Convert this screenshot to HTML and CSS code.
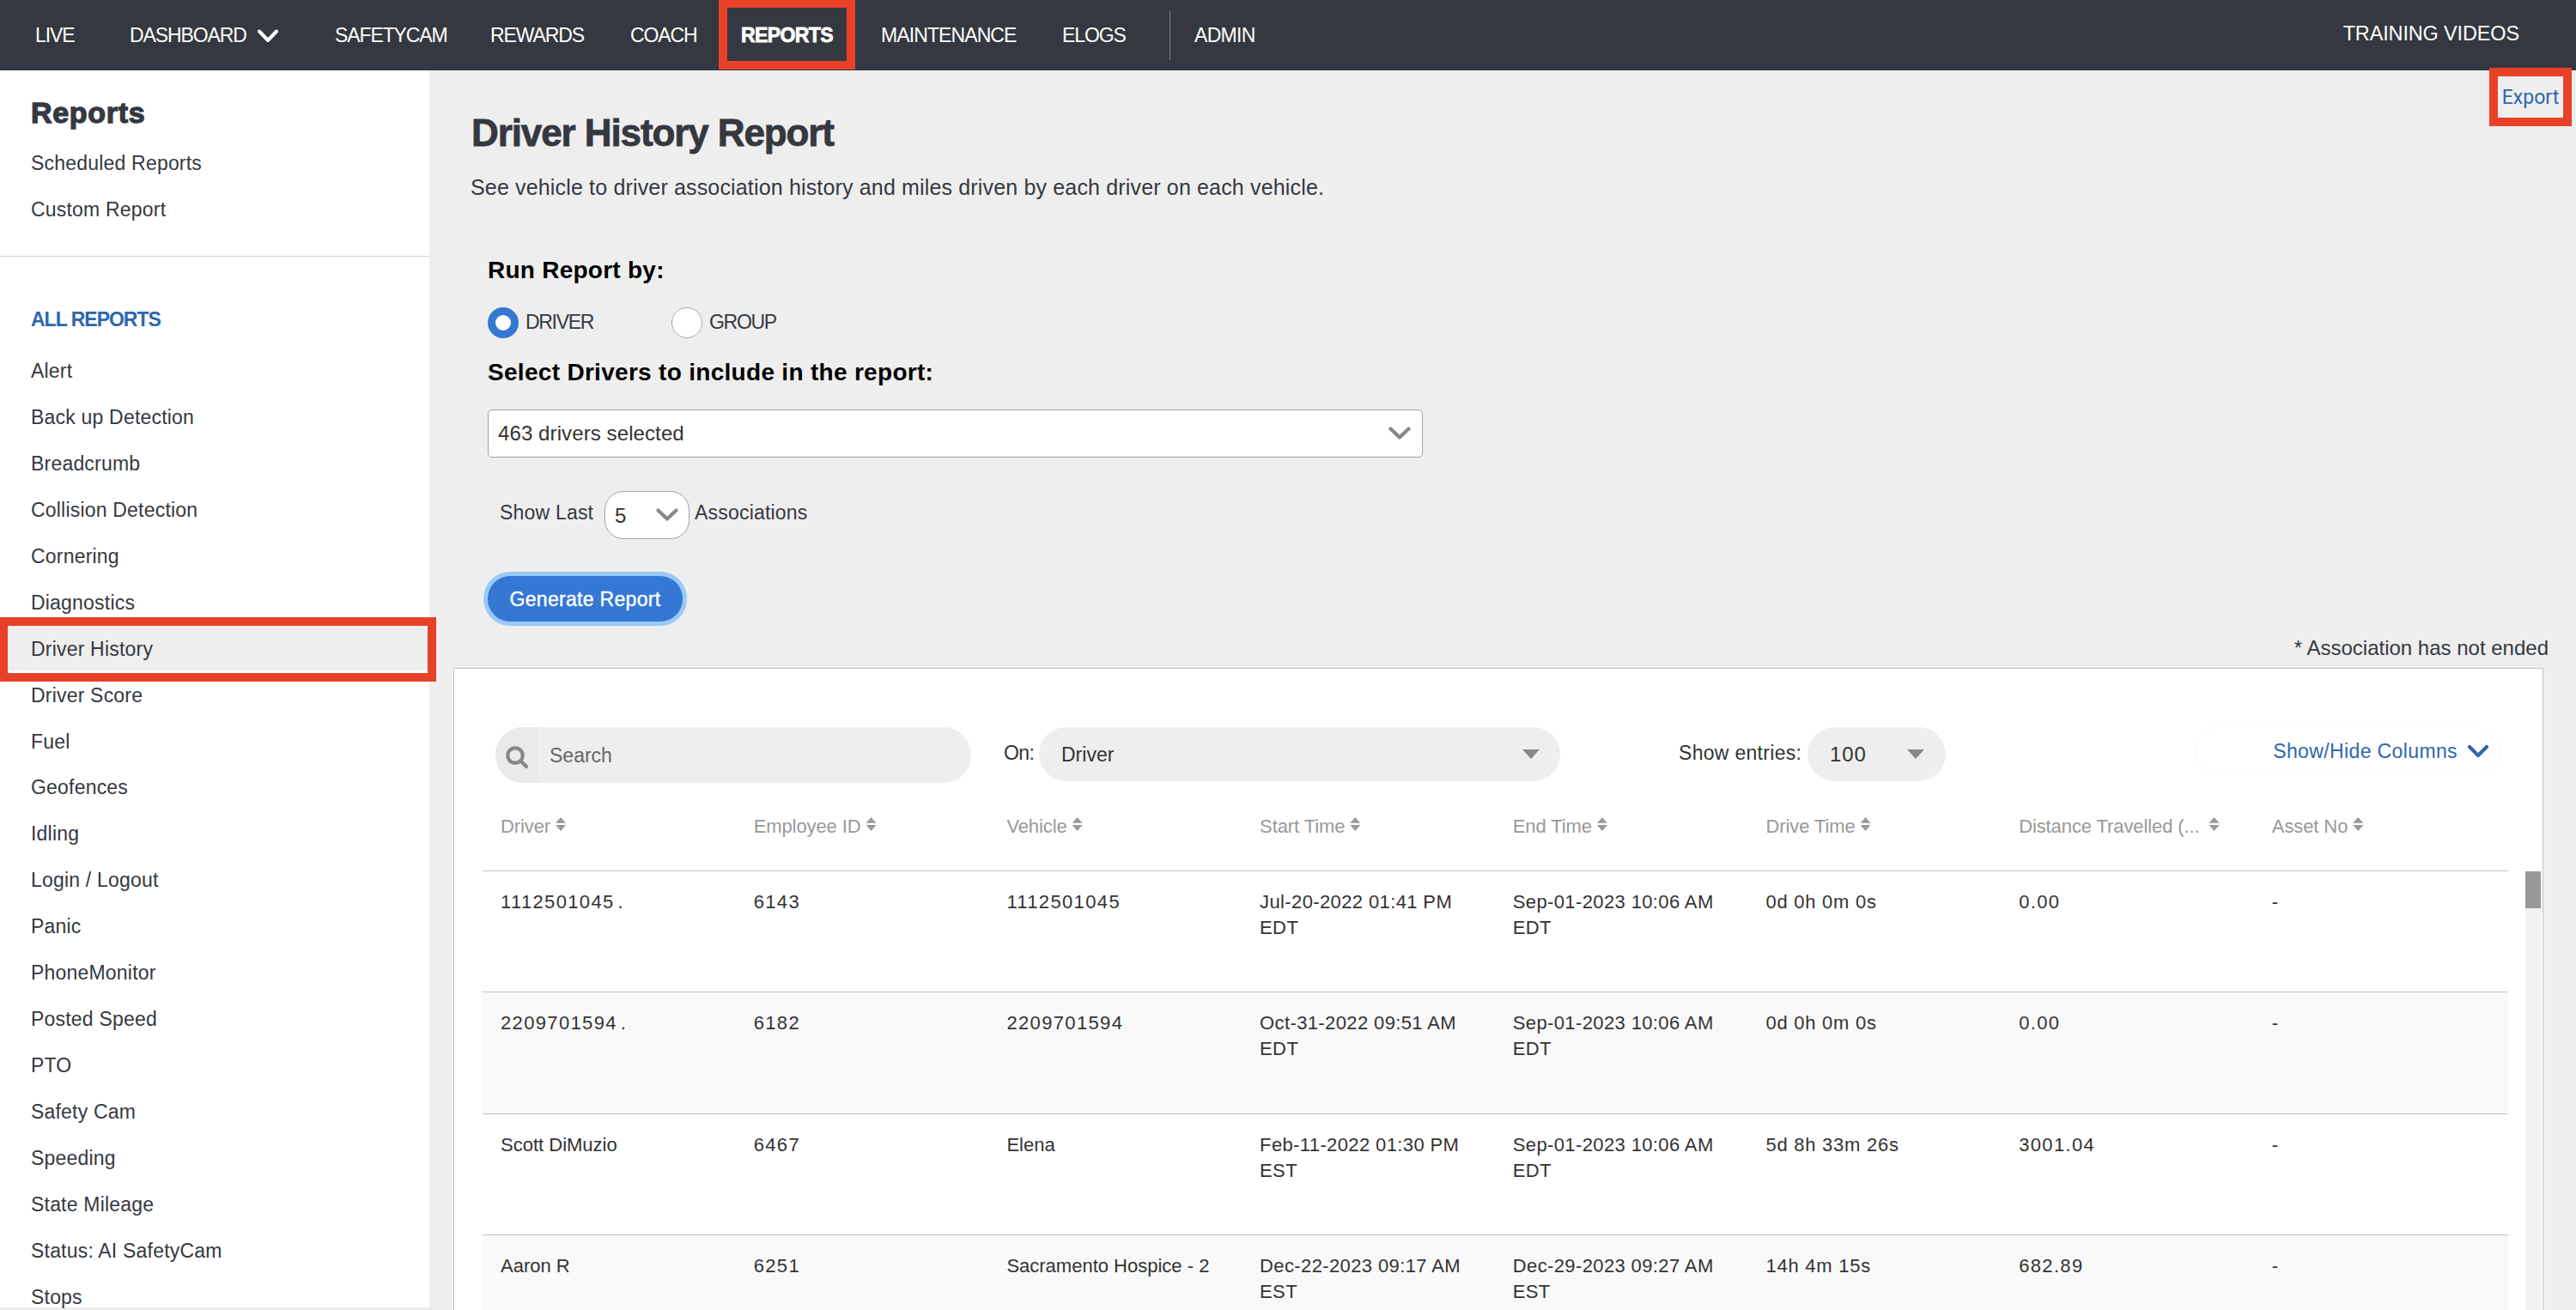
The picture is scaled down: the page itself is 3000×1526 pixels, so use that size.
FILE: index.html
```
<!DOCTYPE html>
<html lang="en">
<head>
    <meta charset="UTF-8">
    <meta name="viewport" content="width=device-width, initial-scale=1.0">
    <title>Driver History Report</title>
    <link rel="stylesheet" href="styles.css">
</head>
<body>
    <nav class="topbar">
        <a class="nav-live">LIVE</a>
        <a class="nav-dashboard">DASHBOARD
            <svg class="chevron" width="24" height="16" viewBox="0 0 24 16"><path d="M2 2.5 L12 13 L22 2.5"/></svg>
        </a>
        <a class="nav-safetycam">SAFETYCAM</a>
        <a class="nav-rewards">REWARDS</a>
        <a class="nav-coach">COACH</a>
        <a class="nav-reports active">REPORTS<span class="highlight"></span></a>
        <a class="nav-maintenance">MAINTENANCE</a>
        <a class="nav-elogs">ELOGS</a>
        <a class="nav-admin">ADMIN</a>
        <a class="nav-training">TRAINING VIDEOS</a>
    </nav>
    <div class="page">
        <aside class="sidebar">
            <div class="sidebar-top">
                <h2>Reports</h2>
                <a>Scheduled Reports</a>
                <a>Custom Report</a>
            </div>
            <h3>ALL REPORTS</h3>
            <ul>
                <li>Alert</li>
                <li>Back up Detection</li>
                <li>Breadcrumb</li>
                <li>Collision Detection</li>
                <li>Cornering</li>
                <li>Diagnostics</li>
                <li class="current">Driver History<span class="highlight"></span></li>
                <li>Driver Score</li>
                <li>Fuel</li>
                <li>Geofences</li>
                <li>Idling</li>
                <li>Login / Logout</li>
                <li>Panic</li>
                <li>PhoneMonitor</li>
                <li>Posted Speed</li>
                <li>PTO</li>
                <li>Safety Cam</li>
                <li>Speeding</li>
                <li>State Mileage</li>
                <li>Status: AI SafetyCam</li>
                <li>Stops</li>
            </ul>
        </aside>
        <main class="content">
            <a class="export">Export</a>
            <h1>Driver History Report</h1>
            <p class="subtitle">See vehicle to driver association history and miles driven by each driver on each vehicle.</p>
            <div class="filters">
                <h4 class="run-by">Run Report by:</h4>
                <div class="radios">
                    <label><span class="radio checked"></span>DRIVER</label>
                    <label><span class="radio"></span>GROUP</label>
                </div>
                <h4 class="select-title">Select Drivers to include in the report:</h4>
                <div class="driver-select">
                    <span>463 drivers selected</span>
                    <svg class="chevron" width="26" height="16" viewBox="0 0 26 16"><path d="M2.5 2.5 L13 12.5 L23.5 2.5"/></svg>
                </div>
                <div class="show-last">
                    <span class="show-label">Show Last</span>
                    <div class="count-select">5
                        <svg class="chevron" width="26" height="16" viewBox="0 0 26 16"><path d="M2.5 2.5 L13 12.5 L23.5 2.5"/></svg>
                    </div>
                    <span class="assoc-label">Associations</span>
                </div>
                <button class="generate">Generate Report</button>
            </div>
            <div class="note">* Association has not ended</div>
            <section class="panel">
                <div class="toolbar">
                    <div class="search">
                        <span class="search-icon">
                            <svg width="27" height="27" viewBox="0 0 27 27"><circle cx="11" cy="11" r="8.7"/><path d="M17.5 17.5 L24 24"/></svg>
                        </span>
                        <span class="search-text">Search</span>
                    </div>
                    <span class="on-label">On:</span>
                    <div class="pill on-select">Driver<i></i></div>
                    <span class="entries-label">Show entries:</span>
                    <div class="pill entries-select">100<i></i></div>
                    <div class="columns-btn">
                        Show/Hide Columns
                        <svg class="chevron" width="26" height="16" viewBox="0 0 26 16"><path d="M3 3 L13 13 L23 3"/></svg>
                    </div>
                </div>
                <div class="row head">
                    <div>Driver<b class="sort"></b></div>
                    <div>Employee ID<b class="sort"></b></div>
                    <div>Vehicle<b class="sort"></b></div>
                    <div>Start Time<b class="sort"></b></div>
                    <div>End Time<b class="sort"></b></div>
                    <div>Drive Time<b class="sort"></b></div>
                    <div>Distance Travelled (...<b class="sort far"></b></div>
                    <div>Asset No<b class="sort"></b></div>
                </div>
                <div class="table-body">
                    <div class="rows">
                        <div class="row">
                            <div class="num">1112501045<span class="dot">.</span></div>
                            <div class="num">6143</div>
                            <div class="num">1112501045</div>
                            <div class="date">Jul-20-2022 01:41 PM<br>EDT</div>
                            <div class="date">Sep-01-2023 10:06 AM<br>EDT</div>
                            <div class="time">0d 0h 0m 0s</div>
                            <div class="num">0.00</div>
                            <div>-</div>
                        </div>
                        <div class="row">
                            <div class="num">2209701594<span class="dot">.</span></div>
                            <div class="num">6182</div>
                            <div class="num">2209701594</div>
                            <div class="date">Oct-31-2022 09:51 AM<br>EDT</div>
                            <div class="date">Sep-01-2023 10:06 AM<br>EDT</div>
                            <div class="time">0d 0h 0m 0s</div>
                            <div class="num">0.00</div>
                            <div>-</div>
                        </div>
                        <div class="row">
                            <div>Scott DiMuzio</div>
                            <div class="num">6467</div>
                            <div>Elena</div>
                            <div class="date">Feb-11-2022 01:30 PM<br>EST</div>
                            <div class="date">Sep-01-2023 10:06 AM<br>EDT</div>
                            <div class="time">5d 8h 33m 26s</div>
                            <div class="num">3001.04</div>
                            <div>-</div>
                        </div>
                        <div class="row">
                            <div>Aaron R</div>
                            <div class="num">6251</div>
                            <div>Sacramento Hospice - 2</div>
                            <div class="date">Dec-22-2023 09:17 AM<br>EST</div>
                            <div class="date">Dec-29-2023 09:27 AM<br>EST</div>
                            <div class="time">14h 4m 15s</div>
                            <div class="num">682.89</div>
                            <div>-</div>
                        </div>
                    </div>
                    <div class="scrollbar"><div class="thumb"></div></div>
                </div>
            </section>
        </main>
    </div>
</body>
</html>
```
FILE: styles.css
```
* {
    box-sizing: border-box;
}
body {
    margin: 0;
    height: 1526px;
    overflow: hidden;
    background: #eee;
    color: #353840;
    font-family: "Liberation Sans", Arial, sans-serif;
    font-size: 23px;
}
h1, h2, h3, h4, p, ul {
    margin: 0;
    padding: 0;
}
.chevron {
    fill: none;
    stroke: #888;
    stroke-width: 4.2;
    stroke-linecap: round;
    stroke-linejoin: round;
}

/* red callout frames */
.highlight {
    position: absolute;
    border: 10px solid #e94127;
}

/* top navigation */
.topbar {
    height: 82px;
    padding-left: 41px;
    display: flex;
    align-items: center;
    background: #353840;
    color: #fff;
    font-size: 23px;
    letter-spacing: -1.1px;
    white-space: nowrap;
}
.topbar a {
    position: relative;
    flex: none;
    line-height: 82px;
}
.topbar .chevron {
    stroke: #fff;
    stroke-width: 4;
    margin-left: 8px;
    vertical-align: -1px;
}
.nav-live { width: 110px; }
.nav-dashboard { width: 239px; }
.nav-safetycam { width: 181px; }
.nav-rewards { width: 163px; }
.nav-coach { width: 129px; }
.nav-reports { width: 163px; }
.nav-maintenance { width: 211px; letter-spacing: -0.9px; }
.nav-elogs { width: 125px; }
.topbar .nav-admin {
    line-height: 57px;
    border-left: 1px solid #84868b;
    padding-left: 28px;
    letter-spacing: -0.7px;
}
.topbar .nav-training {
    margin-left: auto;
    margin-right: 66px;
    font-size: 23.5px;
    letter-spacing: -0.15px;
    line-height: 78px;
    height: 82px;
}
.topbar .active {
    font-weight: bold;
    letter-spacing: -0.6px;
    -webkit-text-stroke: 0.8px #fff;
}
.active .highlight {
    left: -26px;
    top: -1px;
    width: 159px;
    height: 82px;
}

/* sidebar */
.page {
    display: flex;
    height: 1444px;
}
.sidebar {
    width: 500px;
    height: 1441px;
    background: #fff;
    letter-spacing: 0.2px;
}
.sidebar-top {
    height: 217px;
    padding: 25px 0 0 36px;
    border-bottom: 1px solid #d3d3d3;
}
.sidebar-top h2 {
    font-size: 34px;
    line-height: 48px;
    letter-spacing: 0.7px;
    -webkit-text-stroke: 1.3px #353840;
}
.sidebar-top a {
    display: block;
    line-height: 54px;
}
.sidebar-top h2 + a {
    margin-top: 8px;
}
.sidebar h3 {
    margin: 53px 0 13px 36px;
    font-size: 23px;
    line-height: 40px;
    letter-spacing: -1px;
    color: #2d67ac;
}
.sidebar li {
    position: relative;
    height: 53.95px;
    line-height: 54px;
    padding-left: 36px;
    list-style: none;
}
.sidebar li.current {
    background: #eee;
    height: 52px;
    margin-bottom: 1.95px;
}
.current .highlight {
    left: -1px;
    top: -10px;
    width: 509px;
    height: 75px;
}

/* report form */
.content {
    position: relative;
    flex: 1;
    padding-left: 28px;
}
.export {
    position: absolute;
    top: -3px;
    right: 5px;
    width: 96px;
    height: 68px;
    border: 10px solid #e94127;
    font-family: Roboto, sans-serif;
    font-size: 23px;
    line-height: 50px;
    text-align: center;
    color: #2d67ac;
}
.content h1 {
    margin: 43px 0 0 21px;
    font-size: 44px;
    line-height: 60px;
    letter-spacing: -1.1px;
    -webkit-text-stroke: 0.8px #353840;
}
.subtitle {
    margin: 13px 0 0 20px;
    font-size: 25px;
    line-height: 40px;
    letter-spacing: 0.16px;
}
.filters {
    margin-left: 40px;
}
.filters h4 {
    font-size: 28px;
    line-height: 40px;
    color: #000;
}
.run-by {
    margin-top: 57px;
    letter-spacing: 0.25px;
}
.filters .select-title {
    margin-top: 20px;
    letter-spacing: 0.3px;
}
.radios {
    display: flex;
    margin-top: 23px;
    height: 36px;
}
.radios label {
    display: flex;
    gap: 8px;
    width: 214px;
    font-size: 23px;
    line-height: 34px;
    letter-spacing: -1.3px;
}
.radio {
    width: 36px;
    height: 36px;
    border: 1px solid #aaa;
    border-radius: 50%;
    background: #fff;
}
.radio.checked {
    border: 9px solid #3478d4;
}
.driver-select {
    display: flex;
    align-items: center;
    justify-content: space-between;
    margin-top: 23px;
    width: 1089px;
    height: 56px;
    padding: 0 13px 0 11px;
    border: 1px solid #a2a2a2;
    border-radius: 5px;
    background: #fff;
    font-size: 24px;
    letter-spacing: 0.1px;
    color: #333;
}
.show-last {
    display: flex;
    margin-top: 39px;
    height: 56px;
    line-height: 51px;
    letter-spacing: 0.2px;
}
.show-label {
    width: 136px;
    padding-left: 14px;
}
.count-select {
    display: flex;
    align-items: center;
    justify-content: space-between;
    width: 99px;
    padding: 0 12px 0 11px;
    border: 1px solid #a2a2a2;
    border-radius: 22px;
    background: #fff;
    font-size: 24px;
    color: #333;
}
.assoc-label {
    margin-left: 6px;
}
.generate {
    display: block;
    margin-top: 43px;
    width: 227px;
    height: 53px;
    padding: 2px 0 0;
    border: 0;
    border-radius: 26px;
    background: #3478d4;
    box-shadow: 0 0 0 5px #9ccaf7;
    color: #fff;
    font-family: inherit;
    font-size: 23px;
    letter-spacing: 0.3px;
    -webkit-text-stroke: 0.4px #fff;
}
.note {
    margin: 16px 32px 0 0;
    font-size: 24px;
    line-height: 30px;
    text-align: right;
}

/* results panel */
.panel {
    margin-top: 8px;
    width: 2434px;
    height: 760px;
    border: 1px solid #c4c4c4;
    background: #fff;
    color: #333;
}
.toolbar {
    display: flex;
    margin: 68px 0 0 48px;
    height: 65px;
    line-height: 60px;
    white-space: nowrap;
}
.search {
    display: flex;
    width: 554px;
    border-radius: 32px;
    background: #eee;
    overflow: hidden;
    line-height: 66px;
}
.search-icon {
    width: 50px;
    padding: 22px 0 0 12px;
    background: #eaeaea;
    line-height: 0;
}
.search-icon svg {
    fill: none;
    stroke: #888;
    stroke-width: 4.2;
    stroke-linecap: round;
}
.search-text {
    padding-left: 13px;
    color: #666;
}
.on-label {
    margin-left: 38px;
    width: 41px;
    letter-spacing: -0.6px;
}
.pill {
    display: flex;
    align-items: center;
    justify-content: space-between;
    height: 63px;
    padding: 0 24px 0 26px;
    border-radius: 32px;
    background: #eee;
}
.pill i {
    border: 10px solid transparent;
    border-top: 11px solid #888;
    border-bottom: 0;
}
.on-select {
    width: 607px;
}
.entries-label {
    margin-left: 138px;
    width: 150px;
    letter-spacing: 0.3px;
}
.entries-select {
    width: 161px;
    padding-right: 25px;
    font-size: 24px;
    letter-spacing: 0.9px;
}
.columns-btn {
    display: flex;
    align-items: center;
    justify-content: flex-end;
    gap: 11px;
    margin-left: 290px;
    width: 356px;
    height: 55px;
    padding-right: 12px;
    border: 1px solid #fafafa;
    border-radius: 26px;
    color: #2d67ac;
    letter-spacing: 0.38px;
}
.columns-btn .chevron {
    stroke: #2d67ac;
}
.row {
    display: grid;
    grid-template-columns: repeat(8, 294.7px);
    width: 2359px;
    height: 141.3px;
    padding-top: 21px;
    border-top: 1px solid #c4c4c4;
    font-size: 22px;
    line-height: 30px;
    white-space: nowrap;
}
.row > div {
    padding-left: 21px;
}
.row:nth-child(even) {
    background: #f9f9f9;
}
.row.head {
    margin-left: 33px;
    height: 102px;
    padding-top: 36px;
    border: 0;
    background: none;
    color: #999;
    letter-spacing: -0.1px;
}
.head > div {
    display: flex;
}
.sort {
    width: 12px;
    height: 16px;
    margin: 4px 0 0 6px;
    background: #999;
    clip-path: polygon(50% 0, 100% 42%, 0 42%, 0 56%, 100% 56%, 50% 100%, 0 56%, 0 42%);
}
.sort.far {
    margin-left: 11px;
}
.num {
    letter-spacing: 1.35px;
}
.dot {
    margin-left: 4px;
}
.date {
    letter-spacing: 0.38px;
}
.time {
    letter-spacing: 0.75px;
}
.table-body {
    display: flex;
    margin-left: 33px;
}
.scrollbar {
    margin: 1px 0 0 20px;
    width: 18px;
    background: #f1f1f1;
}
.thumb {
    height: 43px;
    background: #989898;
}
```
